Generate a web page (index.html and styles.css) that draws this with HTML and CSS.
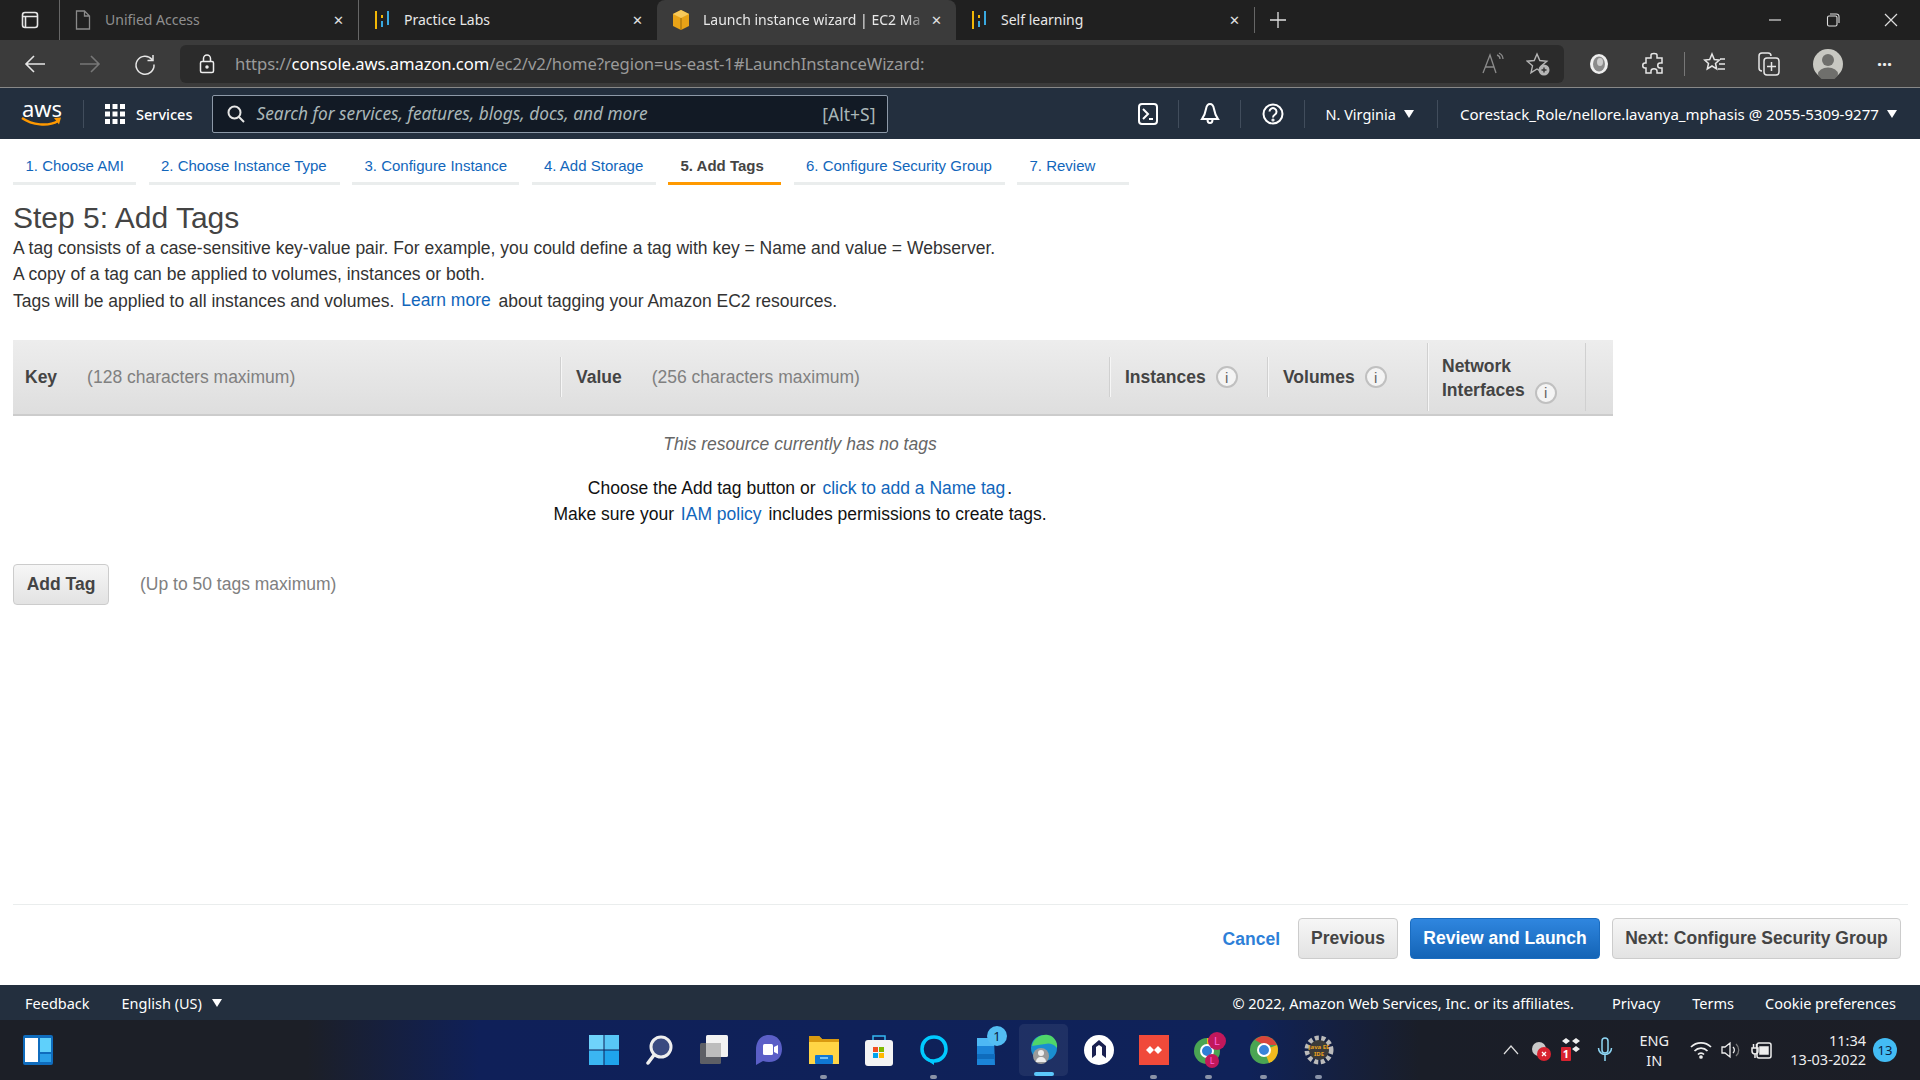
FILE: index.html
```html
<!DOCTYPE html>
<html lang="en">
<head>
<meta charset="utf-8">
<title>Launch instance wizard | EC2 Management Console</title>
<link rel="stylesheet" href="styles.css">
</head>
<body>
<div class="tabbar">
  <svg class="tb-layout" width="18" height="18" viewBox="0 0 18 18" fill="none" stroke="#e6e6e6" stroke-width="1.6"><rect x="1.5" y="1.5" width="15" height="15" rx="2.5"/><path d="M1.5 5.5h15M4.5 5.5v11" /></svg>
  <div class="tab tab-dim">
    <svg class="tab-ic" width="16" height="20" viewBox="0 0 16 20" fill="none" stroke="#8a8a8a" stroke-width="1.3"><path d="M1.5 1h8l5 5v13h-13zM9.5 1v5h5"/></svg>
    <span class="tab-t">Unified Access</span><span class="tab-x">✕</span>
  </div>
  <div class="tab">
    <svg class="tab-ic" width="16" height="20" viewBox="0 0 16 20"><path d="M1 1h2v18H1z" fill="#f2b705"/><path d="M7 5h2v3H7z" fill="#f2b705"/><path d="M7 11h2v6H7z" fill="#39a9e0"/><path d="M13 1h2v14h-2z" fill="#39a9e0"/></svg>
    <span class="tab-t">Practice Labs</span><span class="tab-x">✕</span>
  </div>
  <div class="tab tab-active">
    <svg class="tab-ic" width="18" height="20" viewBox="0 0 18 20"><path d="M9 0l8 4v12l-8 4-8-4V4z" fill="#e8a317"/><path d="M9 0l8 4-8 4-8-4z" fill="#f7c95a"/><path d="M9 8v12" stroke="#9a6a0a" stroke-width="1"/></svg>
    <span class="tab-t tab-fade">Launch instance wizard | EC2 Ma</span><span class="tab-x">✕</span>
  </div>
  <div class="tab tab-last">
    <svg class="tab-ic" width="16" height="20" viewBox="0 0 16 20"><path d="M1 1h2v18H1z" fill="#f2b705"/><path d="M7 5h2v3H7z" fill="#f2b705"/><path d="M7 11h2v6H7z" fill="#39a9e0"/><path d="M13 1h2v14h-2z" fill="#39a9e0"/></svg>
    <span class="tab-t">Self learning</span><span class="tab-x">✕</span>
  </div>
  <svg class="tab-plus" width="18" height="18" viewBox="0 0 18 18" stroke="#e0e0e0" stroke-width="1.3"><path d="M9 1v16M1 9h16"/></svg>
  <div class="winctl">
    <svg width="14" height="14" viewBox="0 0 14 14" stroke="#ddd" stroke-width="1.2"><path d="M1 7h12"/></svg>
    <svg width="14" height="14" viewBox="0 0 14 14" fill="none" stroke="#ddd" stroke-width="1.1"><rect x="1.5" y="3" width="9.5" height="10" rx="1.5"/><path d="M4 1h6.5A2.5 2.5 0 0 1 13 3.500V10"/></svg>
    <svg width="14" height="14" viewBox="0 0 14 14" stroke="#ddd" stroke-width="1.2"><path d="M1 1l12 12M13 1L1 13"/></svg>
  </div>
</div>

<div class="toolbar">
  <svg class="tool-ic" width="24" height="24" viewBox="0 0 24 24" fill="none" stroke="#e6e6e6" stroke-width="1.6"><path d="M22 12H3M11 4l-8 8 8 8"/></svg>
  <svg class="tool-ic" width="24" height="24" viewBox="0 0 24 24" fill="none" stroke="#777" stroke-width="1.6"><path d="M2 12h19M13 4l8 8-8 8"/></svg>
  <svg class="tool-ic" width="24" height="24" viewBox="0 0 24 24" fill="none" stroke="#e6e6e6" stroke-width="1.5"><path d="M19 7.500A9 9 0 1 0 21 12.500M20 3v5.500h-5.500"/></svg>
  <div class="addr">
    <svg class="addr-lock" width="16" height="20" viewBox="0 0 16 20" fill="none" stroke="#eee" stroke-width="1.5"><rect x="1.500" y="7.500" width="13" height="11" rx="1.500"/><path d="M4.500 7.500V4.500a3.500 3.500 0 0 1 7 0v3"/><circle cx="8" cy="13" r="1" fill="#eee"/></svg>
    <span class="url">https://<b>console.aws.amazon.com</b>/ec2/v2/home?region=us-east-1#LaunchInstanceWizard:</span>
    <svg class="addr-ic1" width="24" height="24" viewBox="0 0 24 24" fill="none" stroke="#8b8b8b" stroke-width="1.3"><path d="M2 21L9 3l6 18M4.500 15h9M16 3a4 4 0 0 1 3 4M18 1a7 7 0 0 1 4 6"/></svg>
    <svg class="addr-ic2" width="24" height="24" viewBox="0 0 24 24" fill="none" stroke="#b5b5b5" stroke-width="1.4"><path d="M11 2l2.800 6.500 7 .7-5.300 4.600 1.500 6.900L11 17l-6 3.700 1.500-6.900L1.200 9.200l7-.7z"/><circle cx="18" cy="18" r="5.500" fill="#b5b5b5" stroke="none"/><path d="M18 15.500v5M15.500 18h5" stroke="#333"/></svg>
  </div>
  <div class="tool-right">
    <svg class="tr1" width="22" height="26" viewBox="0 0 22 26"><ellipse cx="11" cy="13" rx="9" ry="10" fill="#eee"/><ellipse cx="11" cy="13" rx="6" ry="7.500" fill="#8a8a8a"/><ellipse cx="12" cy="11" rx="3" ry="4" fill="#ccc"/></svg>
    <svg class="tr2" width="24" height="24" viewBox="0 0 24 24" fill="none" stroke="#e6e6e6" stroke-width="1.500"><path d="M9 3c0-2 6-2 6 0v3h5v5h-2c-3 0-3 5 0 5h2v5h-5v-2c0-3-6-3-6 0v2H4v-5h-1c-3 0-3-5 0-5h1V6h5z"/></svg>
    <span class="tr-div"></span>
    <svg class="tr3" width="24" height="24" viewBox="0 0 24 24" fill="none" stroke="#e6e6e6" stroke-width="1.500"><path d="M9 2l2.300 5.500 5 .5-3.800 3.500 1.200 5.500L9 14l-4.700 3 1.200-5.500L1.700 8l5-.5zM17 7h5M16 12h6M15 17h7"/></svg>
    <svg class="tr4" width="24" height="26" viewBox="0 0 24 26" fill="none" stroke="#e6e6e6" stroke-width="1.500"><path d="M5 20c-2 0-3-1-3-3V5c0-2 1-3 3-3h6c2 0 3 1 3 3"/><rect x="7" y="7" width="15" height="17" rx="3"/><path d="M14.500 11v9M10 15.500h9"/></svg>
    <svg class="tr5" width="30" height="30" viewBox="0 0 30 30"><circle cx="15" cy="15" r="15" fill="#c8c8c2"/><circle cx="15" cy="11" r="6" fill="#6f6f6c"/><ellipse cx="15" cy="25" rx="10" ry="6.500" fill="#6f6f6c"/></svg>
    <span class="tr-more">···</span>
  </div>
</div>

<nav class="awsnav">
  <div class="aws-logo"><span class="aws-word">aws</span>
    <svg width="42" height="12" viewBox="0 0 42 12" fill="none"><path d="M1 2c10 7 26 9 36 3" stroke="#f90" stroke-width="2.400"/><path d="M33 2l7-.5-2 7z" fill="#f90"/></svg>
  </div>
  <span class="nav-sep sep-logo"></span>
  <svg class="grid-ic" width="20" height="20" viewBox="0 0 20 20" fill="#fff"><path d="M0 0h5v5H0zM7.500 0h5v5h-5zM15 0h5v5h-5zM0 7.500h5v5H0zM7.500 7.500h5v5h-5zM15 7.500h5v5h-5zM0 15h5v5H0zM7.500 15h5v5h-5zM15 15h5v5h-5z"/></svg>
  <span class="services">Services</span>
  <div class="search">
    <svg width="18" height="18" viewBox="0 0 18 18" fill="none" stroke="#e6e6e6" stroke-width="2"><circle cx="7.500" cy="7.500" r="6"/><path d="M12 12l5 5"/></svg>
    <span class="search-ph">Search for services, features, blogs, docs, and more</span>
    <span class="search-key">[Alt+S]</span>
  </div>
  <svg class="ni ni-term" width="20" height="22" viewBox="0 0 20 22" fill="none" stroke="#fff" stroke-width="2"><rect x="1" y="1" width="18" height="20" rx="3"/><path d="M5 6l5 5-5 5M11 16h4"/></svg>
  <span class="nav-sep"></span>
  <svg class="ni ni-bell" width="20" height="24" viewBox="0 0 20 24" fill="none" stroke="#fff" stroke-width="2"><path d="M10 2c-2.500 0-3.500 2-4 5-.6 4-2 7-4 10h16c-2-3-3.400-6-4-10-.5-3-1.500-5-4-5zM7.500 17.500a2.500 3.500 0 0 0 5 0"/></svg>
  <span class="nav-sep"></span>
  <svg class="ni ni-help" width="22" height="22" viewBox="0 0 22 22" fill="none" stroke="#fff" stroke-width="2"><circle cx="11" cy="11" r="9.500"/><path d="M7.500 8.500a3.500 3.500 0 1 1 5.500 3c-1.300 .9-2 1.500-2 3"/><circle cx="11" cy="17" r=".6"/></svg>
  <span class="nav-sep"></span>
  <span class="nav-t region">N. Virginia</span><span class="caret"></span>
  <span class="nav-sep sep-acct"></span>
  <span class="nav-t acct">Corestack_Role/nellore.lavanya_mphasis @ 2055-5309-9277</span><span class="caret"></span>
</nav>

<main class="page">
  <ul class="steps">
    <li class="s1">1. Choose AMI</li>
    <li class="s2">2. Choose Instance Type</li>
    <li class="s3">3. Configure Instance</li>
    <li class="s4">4. Add Storage</li>
    <li class="s5 cur">5. Add Tags</li>
    <li class="s6">6. Configure Security Group</li>
    <li class="s7">7. Review</li>
  </ul>
  <h1>Step 5: Add Tags</h1>
  <p class="p">A tag consists of a case-sensitive key-value pair. For example, you could define a tag with key = Name and value = Webserver.</p>
  <p class="p">A copy of a tag can be applied to volumes, instances or both.</p>
  <p class="p">Tags will be applied to all instances and volumes. <a class="lnk lnk-more">Learn more</a> about tagging your Amazon EC2 resources.</p>

  <div class="thead">
    <div class="th th-key"><b>Key</b><span class="hint">(128 characters maximum)</span></div>
    <div class="th th-val"><b>Value</b><span class="hint">(256 characters maximum)</span></div>
    <div class="th th-ins"><b>Instances</b><span class="info">i</span></div>
    <div class="th th-vol"><b>Volumes</b><span class="info">i</span></div>
    <div class="th th-net"><b>Network<br>Interfaces<span class="info info-net">i</span></b></div>
  </div>

  <div class="empty">
    <div class="empty-i">This resource currently has no tags</div>
    <div class="empty-l">Choose the Add tag button or <a class="lnk lnk-a">click to add a Name tag</a>.</div>
    <div class="empty-l">Make sure your <a class="lnk lnk-b">IAM policy</a> includes permissions to create tags.</div>
  </div>

  <div class="addrow">
    <button class="btn btn-add">Add Tag</button>
    <span class="hint">(Up to 50 tags maximum)</span>
  </div>

  <div class="actions">
    <a class="cancel">Cancel</a>
    <button class="btn btn-prev">Previous</button>
    <button class="btn btn-primary">Review and Launch</button>
    <button class="btn btn-next">Next: Configure Security Group</button>
  </div>
</main>

<footer class="foot">
  <span>Feedback</span>
  <span class="foot-lang">English (US)</span><span class="caret"></span>
  <span class="foot-copy">© 2022, Amazon Web Services, Inc. or its affiliates.</span>
  <span class="foot-priv">Privacy</span>
  <span class="foot-terms">Terms</span>
  <span class="foot-cookie">Cookie preferences</span>
</footer>

<div class="taskbar">
  <svg class="widgets" width="30" height="30" viewBox="0 0 30 30"><rect width="30" height="30" rx="2" fill="#0f6cbd"/><rect x="2" y="3" width="13" height="24" fill="#fff"/><rect x="17" y="3" width="11" height="14" fill="#5fd0fb"/><rect x="17" y="19" width="11" height="8" fill="#2aa0e8"/></svg>
  <div class="tk-center">
    <span class="tk"><svg width="30" height="30" viewBox="0 0 30 30"><path d="M0 0h14.500v14.500H0z" fill="#6fd3fb"/><path d="M15.500 0H30v14.500H15.500z" fill="#58c6f6"/><path d="M0 15.500h14.500V30H0z" fill="#3bb6f2"/><path d="M15.500 15.500H30V30H15.500z" fill="#1fa4ec"/></svg></span>
    <span class="tk"><svg width="28" height="30" viewBox="0 0 28 30" fill="none"><circle cx="16" cy="12" r="10" fill="#3a4a80" stroke="#eee" stroke-width="3"/><path d="M9 20l-6 8" stroke="#eee" stroke-width="3.500" stroke-linecap="round"/></svg></span>
    <span class="tk"><svg width="30" height="30" viewBox="0 0 30 30"><rect x="7" y="0" width="22" height="22" rx="1.500" fill="#f2f2f2"/><rect x="1" y="8" width="21" height="21" rx="1.500" fill="#666" opacity=".9"/><rect x="7" y="8" width="15" height="14" fill="#bdbdbd"/></svg></span>
    <span class="tk"><svg width="30" height="32" viewBox="0 0 30 32"><path d="M15 1C6 1 2 8 2 16v15l7-4c2 .7 4 1 6 1 9 0 13-6 13-13S24 1 15 1z" fill="#5b5fc7"/><rect x="9" y="10" width="10" height="11" rx="1.500" fill="#fff"/><path d="M20 13l4-2v9l-4-2z" fill="#fff"/></svg></span>
    <span class="tk tk-dot"><svg width="30" height="30" viewBox="0 0 30 30"><path d="M0 1h10l3 3h17v25H0z" fill="#ffd545"/><path d="M0 1h10l3 3h17v3H0z" fill="#d99a10"/><rect x="6" y="20" width="18" height="9" rx="1" fill="#0f78d4"/><path d="M11 23h8" stroke="#9bdcff" stroke-width="1.500"/></svg></span>
    <span class="tk"><svg width="30" height="32" viewBox="0 0 30 32"><path d="M9 6V2h12v4" fill="none" stroke="#35b8f2" stroke-width="1.500"/><rect x="1" y="6" width="28" height="26" rx="3" fill="#f4f4f4"/><path d="M9 13h5v5H9z" fill="#f25022"/><path d="M15 13h5v5h-5z" fill="#7fba00"/><path d="M9 19h5v5H9z" fill="#00a4ef"/><path d="M15 19h5v5h-5z" fill="#ffb900"/></svg></span>
    <span class="tk tk-dot"><svg width="30" height="32" viewBox="0 0 30 32" fill="none"><path d="M15 3C7 3 3 9 3 15c0 7 5 12 12 12 6 0 12-5 12-12C27 9 23 3 15 3z" stroke="#00caff" stroke-width="3.500"/><path d="M9 27l6 4v-4" fill="#00caff"/></svg></span>
    <span class="tk tk-badge"><svg width="30" height="30" viewBox="0 0 30 30"><path d="M3 3h17l1 27H3z" fill="#1b84d8"/><path d="M3 3h17v8H3z" fill="#4db8f5"/><path d="M3 19h18v5H3z" fill="#0f6cbd"/></svg><span class="bdg-n">1</span></span>
    <span class="tk tk-cur"><svg width="30" height="32" viewBox="0 0 30 32"><circle cx="15" cy="14" r="13" fill="#1a8fd0"/><path d="M3 12C5 3 13 0 19 1c6 1 10 7 9 13-4-5-9-5-12-4-5 1-9 1-13 2z" fill="#4fd66a"/><circle cx="12" cy="22" r="8" fill="#9a9a9a"/><circle cx="12" cy="19" r="3" fill="#eee"/><path d="M7 28c0-3 2-5 5-5s5 2 5 5z" fill="#eee"/></svg></span>
    <span class="tk"><svg width="30" height="30" viewBox="0 0 30 30" fill="none"><circle cx="15" cy="15" r="15" fill="#fff"/><path d="M15 5L8 11v12l4-3V12l3-2 3 2v8l4 3V11z" fill="#1a2150"/></svg></span>
    <span class="tk tk-dot"><svg width="30" height="30" viewBox="0 0 30 30"><rect width="30" height="30" fill="#f04a3a"/><path d="M7 15l4-4 4 4-4 4zM15 15l4-4 4 4-4 4z" fill="#fff"/></svg></span>
    <span class="tk tk-dot"><svg width="38" height="38" viewBox="0 0 38 38"><circle cx="17" cy="20" r="13" fill="#4aa553"/><path d="M17 7a13 13 0 0 1 12 8H17z" fill="#e8b620"/><circle cx="17" cy="20" r="6" fill="#2f7fd6" stroke="#fff" stroke-width="2"/><circle cx="27" cy="10" r="9" fill="#c2185b"/><circle cx="22" cy="30" r="7" fill="#c2185b"/><text x="27" y="14" class="tk-l">L</text><text x="22" y="33" class="tk-l tk-l2">L</text></svg></span>
    <span class="tk tk-dot"><svg width="30" height="32" viewBox="0 0 30 32"><circle cx="15" cy="16" r="14" fill="#4aa553"/><path d="M15 2a14 14 0 0 1 13 9H15L6 6a14 14 0 0 1 9-4z" fill="#d9453a"/><path d="M28 11a14 14 0 0 1-8 18l-5-13z" fill="#f0b91e"/><circle cx="15" cy="16" r="6" fill="#3a83d8" stroke="#fff" stroke-width="2"/></svg></span>
    <span class="tk tk-dot"><svg width="30" height="32" viewBox="0 0 30 32"><circle cx="15" cy="16" r="12" fill="none" stroke="#bbb" stroke-width="5" stroke-dasharray="4 2.500"/><circle cx="15" cy="16" r="10" fill="#3a3a3a"/><text x="15" y="15" class="tk-j">Java EE</text><text x="15" y="22" class="tk-j">IDE</text></svg></span>
  </div>
  <div class="tray">
    <svg class="tray-up" width="16" height="10" viewBox="0 0 16 10" fill="none" stroke="#ddd" stroke-width="1.200"><path d="M1 9l7-8 7 8"/></svg>
    <svg class="tray-cloud" width="22" height="22" viewBox="0 0 22 22"><circle cx="9" cy="10" r="7" fill="#c9c9c9"/><circle cx="14" cy="15" r="7" fill="#d8222f"/><path d="M12 13l4 4M16 13l-4 4" stroke="#fff" stroke-width="1.300"/></svg>
    <svg class="tray-drop" width="22" height="24" viewBox="0 0 22 24"><path d="M2 3l4-3 4 3-4 3zM12 3l4-3 4 3-4 3zM12 11l4-3 4 3-4 3z" fill="#eee"/><rect x="1" y="9" width="10" height="14" rx="1" fill="#d8222f"/><text x="6" y="20" class="tk-one">1</text></svg>
    <svg class="tray-mic" width="16" height="26" viewBox="0 0 16 26" fill="none" stroke="#8fd7f5" stroke-width="1.500"><rect x="5" y="1" width="6" height="15" rx="3"/><path d="M1.500 11a6.500 6.500 0 0 0 13 0M8 18v6"/></svg>
    <div class="tray-lang"><span>ENG</span><span>IN</span></div>
    <svg class="tray-wifi" width="22" height="18" viewBox="0 0 22 18" fill="none" stroke="#eee" stroke-width="1.700"><path d="M1 6a14 14 0 0 1 20 0M4.500 10a9 9 0 0 1 13 0M8 13.500a4 4 0 0 1 6 0"/><circle cx="11" cy="16" r="1" fill="#eee"/></svg>
    <svg class="tray-vol" width="20" height="20" viewBox="0 0 20 20" fill="none" stroke="#eee" stroke-width="1.300"><path d="M2 7h3l5-4v14l-5-4H2zM13 7a4 4 0 0 1 0 6" /><path d="M16 4a8 8 0 0 1 0 12" stroke="#777"/></svg>
    <svg class="tray-bat" width="22" height="22" viewBox="0 0 22 22" fill="none" stroke="#eee" stroke-width="1.500"><rect x="7" y="4" width="14" height="15" rx="2"/><path d="M10 8h8v7h-8z" fill="#eee"/><path d="M2 9h6v3a3 3 0 0 1-6 0zM3.500 9V5M6.500 9V5M5 15v4" /></svg>
    <div class="clock"><span>11:34</span><span>13-03-2022</span></div>
    <span class="tray-badge">13</span>
  </div>
</div>
</body>
</html>
```
FILE: styles.css
```css
* { box-sizing: border-box; }
html, body { margin: 0; padding: 0; }
body { width: 1920px; height: 1080px; overflow: hidden; display: flex; flex-direction: column; font-family: "Liberation Sans", Arial, sans-serif; background: #fff; color: #444; }

.tabbar { height: 40px; background: #202020; display: flex; align-items: center; flex: none; color: #e8e8e8; font: 14px/18px "Noto Sans", sans-serif; }
.tb-layout { margin-left: 21px; flex: none; }
.tab { width: 299px; height: 40px; display: flex; align-items: center; padding-left: 15px; position: relative; flex: none; }
.tab:first-of-type { margin-left: 20px; border-left: 1px solid #666; }
.tab-dim { color: #8f8f8f; }
.tab-ic { flex: none; }
.tab-t { margin-left: 14px; margin-top: -1px; white-space: nowrap; overflow: hidden; flex: 1; }
.tab-x { flex: none; font-size: 13px; width: 14px; margin-right: 13px; text-align: center; color: #e0e0e0; }
.tab-dim + .tab { border-left: 1px solid #666; }
.tab-active { background: #3b3b3b; border-radius: 8px 8px 0 0; }
.tab-active .tab-t { margin-left: 13px; }
.tab-fade { -webkit-mask-image: linear-gradient(90deg, #000 90%, transparent 100%); mask-image: linear-gradient(90deg, #000 90%, transparent 100%); }
.tab-last { border-right: 1px solid #666; height: 26px; padding-left: 15px; }
.tab-plus { margin-left: 14px; flex: none; }
.winctl { margin-left: auto; display: flex; gap: 44px; padding-right: 22px; }

.toolbar { height: 48px; background: #3b3b3b; border-bottom: 1px solid #888; display: flex; align-items: center; flex: none; padding-left: 23px; }
.tool-ic { margin-right: 31px; flex: none; }
.addr { margin-left: -8px; width: 1384px; height: 38px; background: #2b2b2b; border-radius: 6px; display: flex; align-items: center; padding-left: 19px; flex: none; }
.addr-lock { flex: none; }
.url { margin-left: 20px; font: 16.650px "Noto Sans", sans-serif; color: #9a9a9a; white-space: nowrap; letter-spacing: -.1px; }
.url b { font-weight: 400; color: #fff; }
.addr-ic1 { margin-left: auto; }
.addr-ic2 { margin: 0 14px 0 21px; }
.tool-right { display: flex; align-items: center; padding-left: 24px; }
.tr2 { margin-left: 32px; }
.tr-div { width: 1px; height: 24px; background: #777; margin: 0 18px; }
.tr4 { margin-left: 30px; }
.tr5 { margin-left: 32px; }
.tr-more { margin-left: 34px; color: #eee; font: bold 18px "Noto Sans", sans-serif; }

.awsnav { height: 51px; background: #232f3e; display: flex; align-items: center; flex: none; padding-left: 21px; color: #fff; font: 14.500px "Noto Sans", sans-serif; }
.aws-logo { width: 42px; display: flex; flex-direction: column; align-items: center; line-height: 1; }
.aws-word { font: 22px/16px "Noto Sans", sans-serif; color: #fff; }
.nav-sep { width: 1px; height: 28px; background: #414d5c; margin: 0 20px; flex: none; }
.sep-logo { margin: 0 21px 0 20px; }
.services { margin-left: 11px; font-weight: 500; }
.search { margin-left: 20px; width: 676px; height: 38px; background: #121a25; border: 1px solid #8d99a8; border-radius: 2px; display: flex; align-items: center; padding: 0 12px 0 14px; }
.search-ph { margin-left: 11px; font: italic 17.300px "Noto Sans", sans-serif; color: #aab7b8; white-space: nowrap; }
.search-key { margin-left: auto; font-size: 17.500px; color: #aab7b8; }
.ni { flex: none; }
.ni-term { margin-left: 250px; }
.ni-bell { margin-left: 1px; }
.ni-help { margin-left: 1px; }
.nav-t { white-space: nowrap; }
.caret { width: 0; height: 0; border-left: 5px solid transparent; border-right: 5px solid transparent; border-top: 8px solid #fff; margin-left: 8px; flex: none; }
.sep-acct { margin: 0 22px 0 23px; }
.acct { font-size: 15.030px; }

.page { flex: 1; display: flex; flex-direction: column; padding: 0 12px 0 13px; min-height: 0; }
.steps { list-style: none; margin: 0; padding: 0; display: flex; gap: 12.500px; height: 46px; flex: none; color: #1166bb; font-size: 15px; }
.steps li { height: 46px; border-bottom: 3px solid #eaeded; padding: 18px 0 0 12.500px; white-space: nowrap; }
.s1 { width: 123px; } .s2 { width: 191px; } .s3 { width: 167px; } .s4 { width: 124px; } .s5 { width: 113px; } .s6 { width: 211px; } .s7 { width: 112px; }
.steps .cur { color: #444; font-weight: 700; border-bottom-color: #f90; }
h1 { margin: 17px 0 0; font-size: 30px; font-weight: 400; line-height: 32.500px; color: #444; }
.p { margin: 0; font-size: 17.500px; line-height: 26.500px; color: #333; white-space: nowrap; }
.lnk { color: #1166bb; }
.lnk-more { margin: 0 3px 0 2px; position: relative; top: -1px; }
.lnk-a { margin: 0 2px; }
.lnk-b { margin: 0 2px; }
.thead { margin-top: 26px; width: 1600px; height: 76px; background: linear-gradient(#ededed, #dedede); border-bottom: 2px solid #ccc; display: flex; align-items: center; flex: none; font-size: 17.500px; }
.th { display: flex; align-items: center; height: 40px; }
.th b { color: #444; }
.th-key { width: 548px; padding-left: 12px; }
.th-key .hint { margin-left: 30px; }
.th-val { width: 549px; padding-left: 14px; border-left: 1px solid #f6f6f6; box-shadow: -1px 0 0 #d0d0d0; }
.th-val .hint { margin-left: 30px; }
.th-ins { width: 158px; padding-left: 14px; border-left: 1px solid #f6f6f6; box-shadow: -1px 0 0 #d0d0d0; }
.th-vol { width: 160px; padding-left: 14px; border-left: 1px solid #f6f6f6; box-shadow: -1px 0 0 #d0d0d0; }
.th-net { width: 158px; height: 68px; padding: 4px 0 0 13px; border-left: 1px solid #f6f6f6; box-shadow: -1px 0 0 #d0d0d0; border-right: 1px solid #d0d0d0; line-height: 24px; }
.hint { color: #808080; }
.info { display: inline-flex; width: 22px; height: 22px; margin-left: 10px; border: 2px solid #c0c0c0; border-radius: 50%; align-items: center; justify-content: center; font: 15px "Liberation Sans", sans-serif; color: #666; background: #f4f4f4; flex: none; vertical-align: -4px; }
.info-net { vertical-align: -2px; }
.empty { width: 1574px; text-align: center; font-size: 17.500px; color: #111; flex: none; }
.empty-i { margin-top: 15px; font-style: italic; color: #666; line-height: 26px; margin-bottom: 17.500px; }
.empty-l { line-height: 26.500px; }
.addrow { margin-top: 36px; display: flex; align-items: center; font-size: 17.500px; flex: none; }
.addrow .hint { margin-left: 31px; }
.btn { font-family: inherit; font-size: 17.500px; font-weight: 700; color: #444; height: 41px; background: linear-gradient(#f6f6f6, #e3e3e3); border: 1px solid #ccc; border-radius: 4px; padding: 0; flex: none; }
.btn-add { width: 96px; }
.actions { margin-top: auto; border-top: 1px solid #eaeded; height: 81px; display: flex; align-items: flex-start; justify-content: flex-end; padding: 13px 7px 0 0; flex: none; gap: 12px; }
.cancel { color: #2d7fd8; font-size: 17.500px; font-weight: 700; margin: 11px 6px 0 0; }
.btn-prev { width: 100px; }
.btn-primary { width: 190px; background: linear-gradient(#2f86df, #1464b6); border-color: #1a6cc0; color: #fff; }
.btn-next { width: 289px; }

.foot { height: 35px; background: #232f3e; color: #fff; display: flex; align-items: center; flex: none; padding-left: 25px; font: 14.500px "Noto Sans", sans-serif; }
.foot-lang { margin-left: 32px; }
.foot .caret { margin-left: 10px; }
.foot-copy { margin-left: auto; }
.foot-priv { margin-left: 38px; }
.foot-terms { margin-left: 32px; }
.foot-cookie { margin-left: 31px; margin-right: 24px; }

.taskbar { height: 60px; flex: none; background: linear-gradient(90deg, #1c1f27 0, #1c1f27 16%, #0f2059 25%, #0f2259 65%, #1a1e28 74%, #1c1e26 100%); display: flex; align-items: center; color: #eee; }
.widgets { margin-left: 23px; flex: none; }
.tk-center { margin-left: 523px; display: flex; height: 60px; align-items: center; flex: none; }
.tk { width: 55px; height: 52px; display: flex; align-items: center; justify-content: center; position: relative; flex: none; }
.tk-dot::after { content: ""; position: absolute; left: 50%; margin-left: -3.500px; bottom: -3px; width: 7px; height: 4px; border-radius: 2px; background: #8a93a8; }
.tk-cur { width: 49px; margin: 0 3px; background: rgba(255,255,255,.07); border-radius: 5px; }
.tk-cur::after { content: ""; position: absolute; left: 50%; margin-left: -10px; bottom: 0; width: 20px; height: 4px; border-radius: 2px; background: #5cc8fb; }
.bdg-n { position: absolute; top: 2px; right: 9px; width: 20px; height: 20px; border-radius: 50%; background: #53bdf3; color: #0b2040; font: 13px/20px "Noto Sans", sans-serif; text-align: center; }
.tk-l { font: 11px "Noto Sans", sans-serif; fill: #f6d; text-anchor: middle; }
.tk-l2 { font-size: 9px; }
.tk-j { font: 700 6px "Noto Sans", sans-serif; fill: #e8a020; text-anchor: middle; }
.tk-one { font: 700 11px "Noto Sans", sans-serif; fill: #fff; text-anchor: middle; }
.tray { margin-left: auto; display: flex; align-items: center; padding-right: 23px; font: 14.500px "Noto Sans", sans-serif; }
.tray-cloud { margin-left: 11px; }
.tray-drop { margin-left: 8px; }
.tray-mic { margin-left: 15px; }
.tray-lang { width: 34px; margin-left: 24px; display: flex; flex-direction: column; align-items: center; line-height: 20px; }
.tray-wifi { margin-left: 19px; }
.tray-vol { margin-left: 8px; }
.tray-bat { margin-left: 10px; }
.clock { margin-left: 18px; display: flex; flex-direction: column; align-items: flex-end; line-height: 19px; }
.tray-badge { margin-left: 7px; width: 24px; height: 24px; border-radius: 50%; background: #43bcf4; color: #0b2040; text-align: center; line-height: 24px; font-size: 13px; }
```
